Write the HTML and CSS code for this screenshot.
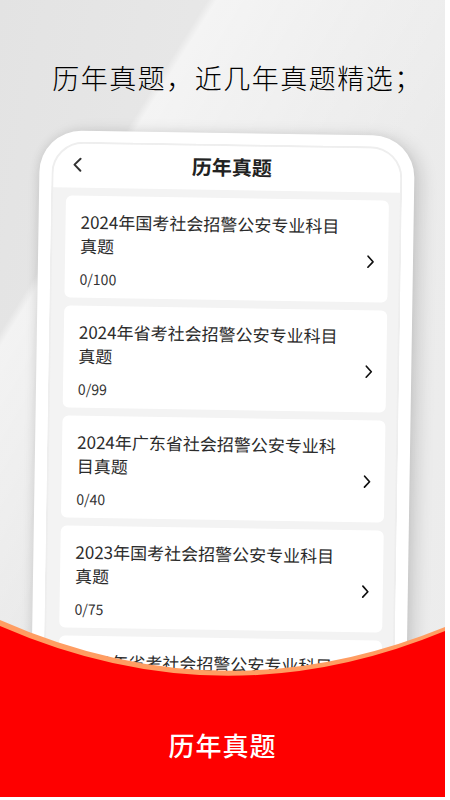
FILE: index.html
```html
<!DOCTYPE html>
<html lang="zh-CN">
<head>
    <meta charset="UTF-8">
    <meta name="viewport" content="width=device-width, initial-scale=1.0">
    <title>历年真题</title>
    <link rel="stylesheet" href="styles.css">
</head>
<body>
    <div class="poster">
        <h1 class="headline">历年真题，近几年真题精选；</h1>

        <div class="phone">
            <div class="screen">
                <div class="topbar">
                    <svg class="back" width="10" height="16" viewBox="0 0 10 16">
                        <path d="M8 2 L2 8 L8 14" fill="none" stroke="#333" stroke-width="2" stroke-linecap="round" stroke-linejoin="round"/>
                    </svg>
                    <span class="topbar-title">历年真题</span>
                </div>
                <div class="list">
                    <div class="card">
                        <div class="card-body">
                            <div class="card-title">2024年国考社会招警公安专业科目真题</div>
                            <div class="card-count">0/100</div>
                        </div>
                        <svg class="arrow" width="9" height="15" viewBox="0 0 9 15"><path d="M2 2 L7 7.5 L2 13" fill="none" stroke="#111" stroke-width="1.7" stroke-linecap="round" stroke-linejoin="round"/></svg>
                    </div>
                    <div class="card">
                        <div class="card-body">
                            <div class="card-title">2024年省考社会招警公安专业科目真题</div>
                            <div class="card-count">0/99</div>
                        </div>
                        <svg class="arrow" width="9" height="15" viewBox="0 0 9 15"><path d="M2 2 L7 7.5 L2 13" fill="none" stroke="#111" stroke-width="1.7" stroke-linecap="round" stroke-linejoin="round"/></svg>
                    </div>
                    <div class="card">
                        <div class="card-body">
                            <div class="card-title">2024年广东省社会招警公安专业科目真题</div>
                            <div class="card-count">0/40</div>
                        </div>
                        <svg class="arrow" width="9" height="15" viewBox="0 0 9 15"><path d="M2 2 L7 7.5 L2 13" fill="none" stroke="#111" stroke-width="1.7" stroke-linecap="round" stroke-linejoin="round"/></svg>
                    </div>
                    <div class="card">
                        <div class="card-body">
                            <div class="card-title">2023年国考社会招警公安专业科目真题</div>
                            <div class="card-count">0/75</div>
                        </div>
                        <svg class="arrow" width="9" height="15" viewBox="0 0 9 15"><path d="M2 2 L7 7.5 L2 13" fill="none" stroke="#111" stroke-width="1.7" stroke-linecap="round" stroke-linejoin="round"/></svg>
                    </div>
                    <div class="card">
                        <div class="card-body">
                            <div class="card-title">2023年省考社会招警公安专业科目真题</div>
                            <div class="card-count">0/80</div>
                        </div>
                        <svg class="arrow" width="9" height="15" viewBox="0 0 9 15"><path d="M2 2 L7 7.5 L2 13" fill="none" stroke="#111" stroke-width="1.7" stroke-linecap="round" stroke-linejoin="round"/></svg>
                    </div>
                </div>
            </div>
        </div>

        <div class="banner">
            <svg class="wave" width="445" height="180" viewBox="0 0 445 180" preserveAspectRatio="none">
                <path d="M0 3 Q222 101 445 10 L445 180 L0 180 Z" fill="#ff9d62"/>
                <path d="M0 9 Q222 106 445 14 L445 180 L0 180 Z" fill="#fe0000"/>
            </svg>
            <div class="banner-text">历年真题</div>
        </div>
    </div>
</body>
</html>
```

FILE: styles.css
```css
body {
    margin: 0;
    background-color: #ffffff;
    font-family: "Noto Sans CJK SC", "Noto Sans", sans-serif;
}
.poster {
    position: relative;
    width: 445px;
    height: 797px;
    overflow: hidden;
    padding-top: 60px;
    box-sizing: border-box;
    background:
        linear-gradient(122deg, rgba(255,255,255,0) 0%, rgba(255,255,255,0) 22%, rgba(255,255,255,0.55) 23%, rgba(255,255,255,0) 55%),
        linear-gradient(100deg, #e3e3e3 0%, #e9e9e9 50%, #ededed 100%);
}
.headline {
    margin: 0;
    padding-left: 30px;
    text-align: center;
    font-size: 27px;
    line-height: 36px;
    font-weight: 300;
    letter-spacing: 1.5px;
    color: #000;
}
.phone {
    width: 375px;
    height: 720px;
    margin: 37px 0 0 40px;
    padding: 11px 12px 0 12px;
    box-sizing: border-box;
    background-color: #ffffff;
    border-radius: 42px 42px 0 0;
    box-shadow: 6px 4px 18px rgba(0, 0, 0, 0.16), -2px 0 10px rgba(0, 0, 0, 0.06);
    transform: rotate(0.9deg);
    transform-origin: center top;
}
.screen {
    height: 100%;
    border: 2px solid #eeeeee;
    border-bottom: none;
    border-radius: 32px 32px 0 0;
    overflow: hidden;
    background-color: #f3f3f3;
}
.topbar {
    position: relative;
    height: 44px;
    padding-bottom: 3px;
    box-sizing: border-box;
    display: flex;
    align-items: center;
    justify-content: center;
    background-color: #ffffff;
}
.back {
    position: absolute;
    left: 19px;
    top: 13px;
}
.topbar-title {
    margin-left: 10px;
    font-size: 20px;
    font-weight: 700;
    color: #222;
}
.list {
    display: flex;
    flex-direction: column;
    gap: 8px;
    padding: 8px 11px 0 13px;
}
.card {
    display: flex;
    align-items: center;
    background-color: #ffffff;
    border-radius: 6px;
    padding: 14px 13px 9px 15px;
}
.card-body {
    flex: 1;
    padding-right: 12px;
}
.card-title {
    font-size: 17px;
    line-height: 24px;
    color: #2b2b2b;
}
.card-count {
    margin-top: 11px;
    font-size: 14px;
    line-height: 20px;
    color: #333;
}
.arrow {
    flex-shrink: 0;
    margin-top: 16px;
}
.banner {
    position: absolute;
    left: 0;
    bottom: 0;
    width: 445px;
    height: 180px;
}
.wave {
    position: absolute;
    left: 0;
    top: 0;
}
.banner-text {
    position: relative;
    padding-top: 110px;
    text-align: center;
    font-size: 26px;
    line-height: 36px;
    font-weight: 500;
    color: #ffffff;
    letter-spacing: 1px;
}
```
